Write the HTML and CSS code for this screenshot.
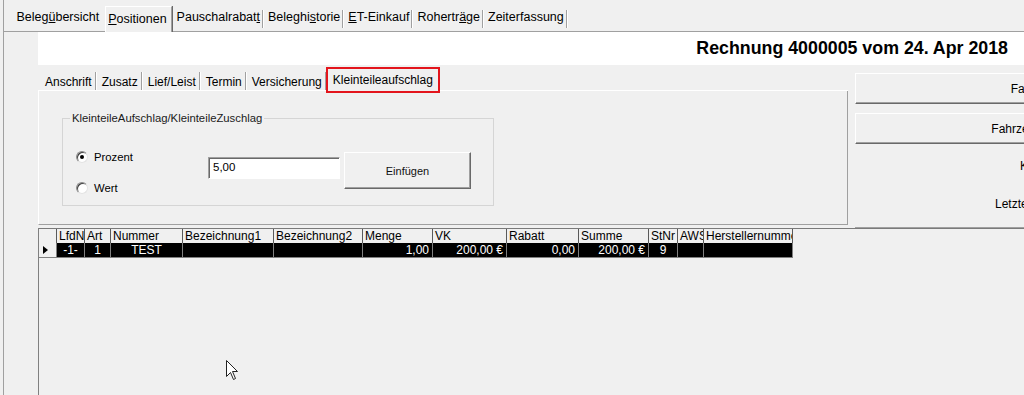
FILE: index.html
```html
<!DOCTYPE html>
<html lang="de">
<head>
  <meta charset="UTF-8">
  <title>Rechnung 4000005</title>
  <link rel="stylesheet" href="styles.css">
</head>
<body>
<div class="window">

  <!-- Haupt-Reiter -->
  <div class="tabs">
    <div class="tab first">Beleg<u>ü</u>bersicht</div>
    <div class="tab active"><u>P</u>ositionen</div>
    <div class="tab">Pauschalrabat<u>t</u></div>
    <div class="tab">Beleghi<u>s</u>torie</div>
    <div class="tab"><u>E</u>T-Einkauf</div>
    <div class="tab">Rohertr<u>ä</u>ge</div>
    <div class="tab">Zeiterfassung</div>
  </div>

  <div class="page">
    <div class="doc-title">Rechnung 4000005 vom 24. Apr 2018</div>

    <div class="work">
      <div class="subtabs-box">
        <div class="subtabs">
          <div class="subtab">Anschrift</div>
          <div class="subtab">Zusatz</div>
          <div class="subtab">Lief/Leist</div>
          <div class="subtab">Termin</div>
          <div class="subtab">Versicherung</div>
          <div class="subtab active">Kleinteileaufschlag</div>
        </div>
        <div class="subpanel">
          <div class="group">
            <div class="group-title">KleinteileAufschlag/KleinteileZuschlag</div>
            <div class="group-body">
              <div class="radios">
                <label class="radio"><span class="dot checked"></span>Prozent</label>
                <label class="radio"><span class="dot"></span>Wert</label>
              </div>
              <div class="textbox">5,00</div>
              <div class="btn">Einfügen</div>
            </div>
          </div>
        </div>
      </div>

      <div class="side">
        <div class="side-btn">Fahrzeug</div>
        <div class="side-btn">Fahrzeughistorie</div>
        <div class="side-label first">Km-Stand</div>
        <div class="side-label">Letzte Inspektion</div>
      </div>
    </div>

    <div class="grid-area">
      <div class="grid">
        <div class="row head">
          <div class="c ind"></div>
          <div class="c w28">LfdNr</div>
          <div class="c w26">Art</div>
          <div class="c w72">Nummer</div>
          <div class="c w91">Bezeichnung1</div>
          <div class="c w89">Bezeichnung2</div>
          <div class="c w70">Menge</div>
          <div class="c w74">VK</div>
          <div class="c w72">Rabatt</div>
          <div class="c w70">Summe</div>
          <div class="c w29">StNr</div>
          <div class="c w26">AWS</div>
          <div class="c w89">Herstellernummer</div>
        </div>
        <div class="row data">
          <div class="c ind"><span class="arrow"></span></div>
          <div class="c w28 mid">-1-</div>
          <div class="c w26 mid">1</div>
          <div class="c w72 mid">TEST</div>
          <div class="c w91"></div>
          <div class="c w89"></div>
          <div class="c w70 num">1,00</div>
          <div class="c w74 num">200,00 €</div>
          <div class="c w72 num">0,00</div>
          <div class="c w70 num">200,00 €</div>
          <div class="c w29 mid">9</div>
          <div class="c w26"></div>
          <div class="c w89"></div>
        </div>
      </div>
    </div>
  </div>
</div>

<svg class="cursor" width="13" height="21" viewBox="0 0 13 21">
  <path d="M0.5 0.5 L0.5 16.5 L4.5 12.5 L7.5 19.5 L9.5 18.5 L6.5 11.5 L11.5 11.5 Z" fill="#fff" stroke="#222" stroke-width="1"/>
</svg>
</body>
</html>
```

FILE: styles.css
```css
* { box-sizing: border-box; }

body {
  margin: 0;
  height: 395px;
  overflow: hidden;
  background: #f0f0f0;
  color: #000;
  font-family: "Liberation Sans", Arial, sans-serif;
  font-size: 12px;
}

.window {
  margin-left: 3px;
  height: 395px;
  border-left: 1px solid #a0a0a0;
}

/* HAUPT-REITER */

.tabs {
  display: flex;
  align-items: flex-end;
  height: 32px;
  padding: 0 0 3px 7.5px;
  border-bottom: 1px solid #a0a0a0;
  font-size: 12.5px;
}

.tab {
  height: 18px;
  line-height: 14px;
  padding: 0 2px 0 5px;
  border-right: 1px solid #a0a0a0;
  box-shadow: 1px 0 0 #fff;
  white-space: nowrap;
}

.tab.first {
  border-right: none;
  box-shadow: none;
}

.tab.active {
  height: 26px;
  padding: 5px 4px 0 2px;
  margin: 0 0 -4px 4px;
  border-left: 1px solid #fff;
  border-top: 1px solid #fff;
  border-right: 1px solid #a0a0a0;
  background: #f0f0f0;
  box-shadow: 1px 0 0 #696969;
}

.page {
  padding-left: 34px;
}

.doc-title {
  height: 33px;
  line-height: 33px;
  background: #fff;
  text-align: right;
  padding-right: 16px;
  font-size: 17.8px;
  font-weight: bold;
  white-space: nowrap;
}

/* UNTER-REITER */

.work {
  display: flex;
  margin-top: 1px;
}

.subtabs-box {
  width: 810px;
  flex-shrink: 0;
  height: 159px;
}

.subtabs {
  display: flex;
  align-items: flex-end;
  height: 25px;
  padding-left: 1px;
  border-bottom: 1px solid #fff;
}

.subtab {
  height: 18px;
  padding: 3px 3px 0 6px;
  line-height: 14px;
  border-right: 1px solid #a0a0a0;
  box-shadow: 1px 0 0 #fff;
  white-space: nowrap;
}

.subtab.active {
  height: 26px;
  padding: 4px 5px 0 5px;
  margin-bottom: -3px;
  border: 2px solid #e3151c;
  box-shadow: none;
  background: #f0f0f0;
}

.subpanel {
  height: 134px;
  border-left: 1px solid #fff;
  border-right: 1px solid #a0a0a0;
  border-bottom: 1px solid #a0a0a0;
  padding: 27px 0 0 23px;
}

.group {
  width: 432px;
  height: 88px;
  border: 1px solid #d5d5d5;
  font-size: 11.3px;
}

.group-title {
  width: fit-content;
  margin: -8px 0 0 7px;
  padding: 0 2px;
  line-height: 14px;
  background: #f0f0f0;
  color: #1a1a1a;
}

.group-body {
  display: flex;
  align-items: flex-start;
}

.radios {
  display: flex;
  flex-direction: column;
  gap: 17px;
  width: 132px;
  margin: 25px 0 0 13px;
}

.radio {
  display: flex;
  align-items: center;
  gap: 6px;
  height: 14px;
}

.dot {
  width: 12px;
  height: 12px;
  border-radius: 50%;
  background: #fff;
  border: 1px solid;
  border-color: #8a8a8a #e3e3e3 #e3e3e3 #8a8a8a;
  box-shadow: inset 1px 1px 0 #404040;
  display: flex;
  align-items: center;
  justify-content: center;
}

.dot.checked::after {
  content: "";
  width: 4px;
  height: 4px;
  border-radius: 50%;
  background: #000;
}

.textbox {
  width: 132px;
  height: 22px;
  margin-top: 32px;
  padding: 3px 0 0 4px;
  background: #fff;
  border: 1px solid;
  border-color: #a0a0a0 #fff #fff #a0a0a0;
  box-shadow: inset 1px 1px 0 #696969;
  font-size: 11.5px;
}

.btn {
  width: 127px;
  height: 37px;
  margin: 27px 0 0 4px;
  display: flex;
  align-items: center;
  justify-content: center;
  font-size: 11px;
  color: #111;
  border: 1px solid;
  border-color: #fff #696969 #696969 #fff;
  box-shadow: inset -1px -1px 0 #a0a0a0;
}

/* RECHTE SPALTE */

.side {
  width: 362px;
  flex-shrink: 0;
  height: 162px;
  margin-left: 7px;
  padding-top: 7px;
  border-bottom: 1px solid #a0a0a0;
  display: flex;
  flex-direction: column;
}

.side-btn {
  height: 31px;
  margin-bottom: 9px;
  display: flex;
  align-items: center;
  justify-content: center;
  border: 1px solid;
  border-color: #fff #696969 #696969 #fff;
  box-shadow: inset -1px -1px 0 #a0a0a0;
  white-space: nowrap;
}

.side-label {
  padding-left: 140px;
  line-height: 14px;
  margin-top: 24px;
  white-space: nowrap;
}

.side-label.first {
  margin-top: 6px;
  padding-left: 165px;
}

/* TABELLE */

.grid-area {
  height: 170px;
  border-left: 1px solid #808080;
}

.row {
  display: flex;
  height: 15px;
  line-height: 14px;
}

.row.head {
  border-top: 1px solid #7a7a7a;
}

.row.head .c {
  border-right: 1px solid #5a5a5a;
  padding-left: 2px;
}

.row.data {
  background: #000;
  color: #fff;
  border-bottom: 1px solid #808080;
  width: 754px;
}

.row.data .c {
  border-right: 1px solid #808080;
}

.c {
  flex-shrink: 0;
  overflow: hidden;
  white-space: nowrap;
}

.c.mid { text-align: center; }
.c.num { text-align: right; padding-right: 3px; }

.ind { width: 18px; }
.row.data .ind {
  background: #f0f0f0;
  display: flex;
  align-items: center;
  padding-left: 4px;
}

.arrow {
  width: 0;
  height: 0;
  border-top: 4px solid transparent;
  border-bottom: 4px solid transparent;
  border-left: 5px solid #000;
}

.w26 { width: 26px; }
.w28 { width: 28px; }
.w29 { width: 29px; }
.w70 { width: 70px; }
.w72 { width: 72px; }
.w74 { width: 74px; }
.w89 { width: 89px; }
.w91 { width: 91px; }

.cursor {
  position: absolute;
  left: 226px;
  top: 360px;
}
```
